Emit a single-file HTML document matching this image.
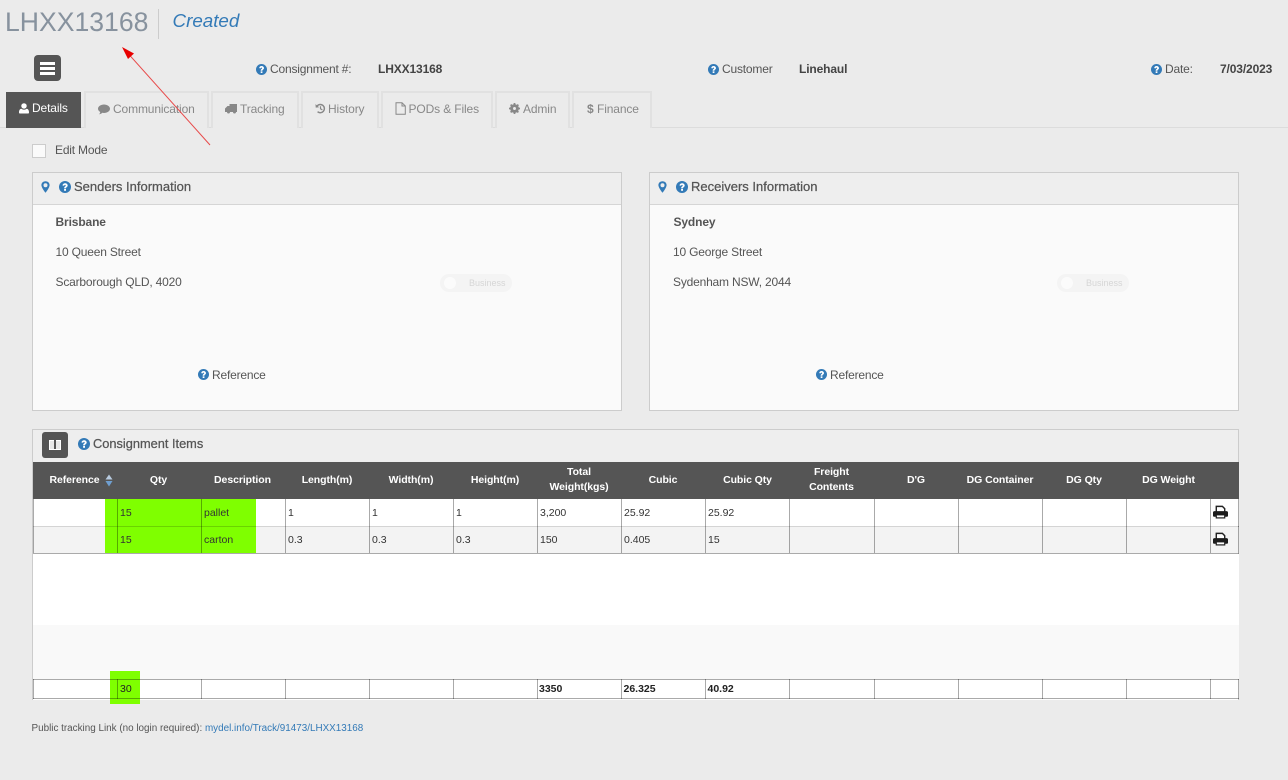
<!DOCTYPE html>
<html><head><meta charset="utf-8"><title>LHXX13168</title>
<style>
html,body{margin:0;padding:0;width:1288px;height:780px;overflow:hidden;background:#ebebeb;font-family:"Liberation Sans",sans-serif;color:#444}
.a{position:absolute;box-sizing:border-box}
.t{position:absolute;white-space:nowrap;font-size:12px;line-height:14px;color:#555;letter-spacing:-.19px}
.b{font-weight:bold;color:#444;letter-spacing:-.13px}
.tab{position:absolute;box-sizing:border-box;top:91px;height:37px;border:2px solid #e1e1e1;border-bottom:0;background:#ebebeb;color:#888;font-size:12px;line-height:32px;white-space:nowrap;letter-spacing:-.13px}
.tab svg{position:absolute}
.tab span{position:absolute;top:0}
.h{position:absolute;font-size:10.5px;font-weight:bold;color:#fff;text-align:center;line-height:15px;white-space:nowrap;transform:translateX(-50%);letter-spacing:-.08px}
.c{position:absolute;font-size:10.5px;line-height:12px;color:#333;white-space:nowrap}
.v{position:absolute;width:1px;background:#aaa;mix-blend-mode:multiply}
.l{position:absolute;height:1px;background:#aaa;mix-blend-mode:multiply}
.ph{position:absolute;font-size:13px;line-height:16px;color:#555;white-space:nowrap;-webkit-text-stroke:.25px #555}
</style></head><body>
<svg width="0" height="0" style="position:absolute"><defs>
<symbol id="q" viewBox="0 0 12 12"><circle cx="6" cy="6" r="6" fill="#337ab7"/><path d="M3.500 4.500C3.600 3 4.800 2.200 6.100 2.200 7.500 2.200 8.700 3.100 8.700 4.500 8.700 6 7 6.100 7 7.400H5.100C5.100 5.500 6.700 5.300 6.700 4.600 6.700 4.200 6.400 3.900 6 3.900 5.500 3.900 5.200 4.300 5.200 4.800Z" fill="#fff"/><rect x="5.100" y="8" width="1.900" height="1.800" fill="#fff"/></symbol>
<symbol id="pin" viewBox="0 0 9 12"><path fill-rule="evenodd" d="M4.500.2C2 .2.400 2 .4 4.100.4 6.200 3 9.800 4.500 11.800 6 9.800 8.600 6.200 8.600 4.100 8.600 2 7 .2 4.500.2ZM4.500 2.200A2 2 0 1 1 4.500 6.200 2 2 0 0 1 4.500 2.200Z" fill="#337ab7"/></symbol>
<symbol id="pr" viewBox="0 0 16 14"><path d="M3.500 6.500V1h6.500l2.500 2.500V6.500" fill="#fff" stroke="#222" stroke-width="1.500"/><path d="M1.500 6h13c.7 0 1.500.6 1.500 1.300V11c0 .6-.4 1-1 1H1c-.6 0-1-.4-1-1V7.300C0 6.600.8 6 1.500 6Z" fill="#1c1c1c"/><rect x="3.500" y="10" width="9" height="3.300" fill="#fff" stroke="#222" stroke-width="1.300"/><rect x="3" y="8.700" width="10" height="1.500" fill="#1c1c1c"/></symbol>
</defs></svg>

<!-- title -->
<div class="t" style="left:5px;top:7px;font-size:26.6px;line-height:31px;color:#87929e;letter-spacing:0">LHXX13168</div>
<div class="a" style="left:158px;top:9px;width:1px;height:30px;background:#ccc"></div>
<div class="t" style="left:172.500px;top:10px;font-size:18.800px;line-height:21px;font-style:italic;color:#337ab7;letter-spacing:0">Created</div>

<!-- menu -->
<div class="a" style="left:34px;top:55px;width:27px;height:26px;background:#555;border-radius:4px"></div>
<div class="a" style="left:40px;top:62px;width:15px;height:2.500px;background:#fff"></div>
<div class="a" style="left:40px;top:67px;width:15px;height:2.500px;background:#fff"></div>
<div class="a" style="left:40px;top:72px;width:15px;height:2.500px;background:#fff"></div>

<svg class="a" style="left:255.500px;top:63.500px" width="11" height="11"><use href="#q"/></svg>
<div class="t" style="left:270px;top:62px">Consignment #:</div>
<div class="t b" style="left:378px;top:62px">LHXX13168</div>
<svg class="a" style="left:707.500px;top:63.500px" width="11" height="11"><use href="#q"/></svg>
<div class="t" style="left:722px;top:62px">Customer</div>
<div class="t b" style="left:799px;top:62px">Linehaul</div>
<svg class="a" style="left:1150.500px;top:63.500px" width="11" height="11"><use href="#q"/></svg>
<div class="t" style="left:1165px;top:62px">Date:</div>
<div class="t b" style="left:1220px;top:62px">7/03/2023</div>

<!-- tabs -->
<div class="a" style="left:0;top:127px;width:1288px;height:1px;background:#dcdcdc"></div>
<div class="tab" style="left:6px;top:92px;width:75px;height:36px;background:#555;border:0;color:#fff;line-height:33px">
<svg style="left:13px;top:11px" width="10" height="11" viewBox="0 0 11 12"><circle cx="5.500" cy="3.200" r="3" fill="#fff"/><path d="M.8 11.500C.2 11.500 0 11 0 10.300 0 8 1 6.300 2.800 6.300 3.500 7 4.400 7.300 5.500 7.300S7.500 7 8.200 6.300C10 6.300 11 8 11 10.300 11 11 10.800 11.500 10.200 11.500Z" fill="#fff"/></svg><span style="left:26px">Details</span></div>
<div class="tab" style="left:84px;width:125px">
<svg style="left:12px;top:11px" width="12" height="11" viewBox="0 0 12 11"><path d="M6 .5C9.200.5 12 2.300 12 4.800S9.200 9 6 9C5.300 9 4.800 9 4.300 8.800 3.500 9.600 2.300 10.300 1 10.300 1.800 9.500 2.200 8.700 2.200 8 .8 7.200 0 6.100 0 4.800 0 2.300 2.800.5 6 .5Z" fill="#888"/></svg><span style="left:27px">Communication</span></div>
<div class="tab" style="left:211px;width:88px">
<svg style="left:12px;top:11px" width="12" height="10" viewBox="0 0 12 10"><path d="M4.500 0H12V8H11A1.500 1.500 0 0 1 8 8H5A1.500 1.500 0 0 1 2 8H0V4.500L2.500 2H4.500Z" fill="#888"/></svg><span style="left:27px">Tracking</span></div>
<div class="tab" style="left:301px;width:78px">
<svg style="left:12px;top:10px" width="11" height="11" viewBox="0 0 12 12"><path d="M2.300 3.200A4.500 4.500 0 1 1 2.800 9.500" fill="none" stroke="#888" stroke-width="1.600"/><path d="M0.500 1.200L0.800 5 4.500 4.700Z" fill="#888"/><path d="M6 3.500V6.300L8 7.500" fill="none" stroke="#888" stroke-width="1.300"/></svg><span style="left:25px">History</span></div>
<div class="tab" style="left:381px;width:112px">
<svg style="left:12px;top:9px" width="11" height="13" viewBox="0 0 11 13"><path d="M1 .7H7L10.300 4V12.300H1Z M7 .7V4H10.300" fill="#ebebeb" stroke="#888" stroke-width="1"/></svg><span style="left:25.500px">PODs &amp; Files</span></div>
<div class="tab" style="left:495px;width:75px">
<svg style="left:12px;top:10px" width="11" height="11" viewBox="0 0 12 12"><circle cx="6" cy="6" r="3.500" fill="none" stroke="#888" stroke-width="2.600"/><path d="M6 0V12M0 6H12M1.800 1.800L10.200 10.200M10.200 1.800L1.800 10.200" stroke="#888" stroke-width="1.900"/><circle cx="6" cy="6" r="1.600" fill="#ebebeb"/></svg><span style="left:26px">Admin</span></div>
<div class="tab" style="left:572px;width:80px"><span style="left:13px;font-weight:bold">$</span><span style="left:23px">Finance</span></div>

<!-- edit mode -->
<div class="a" style="left:32px;top:144px;width:14px;height:14px;background:#fafafa;border:1px solid #ccc"></div>
<div class="t" style="left:55px;top:143px">Edit Mode</div>

<!-- senders panel -->
<div class="a" style="left:32px;top:172px;width:590px;height:239px;background:#fafafa;border:1px solid #ccc"></div>
<div class="a" style="left:33px;top:173px;width:588px;height:32px;background:#eee;border-bottom:1px solid #d5d5d5"></div>
<svg class="a" style="left:41px;top:181px" width="9" height="12"><use href="#pin"/></svg>
<svg class="a" style="left:58.500px;top:181px" width="12" height="12"><use href="#q"/></svg>
<div class="ph" style="left:74px;top:179px">Senders Information</div>
<div class="t b" style="left:55.500px;top:215px;color:#555">Brisbane</div>
<div class="t" style="left:55.500px;top:245px">10 Queen Street</div>
<div class="t" style="left:55.500px;top:275px">Scarborough QLD, 4020</div>
<div class="a" style="left:440px;top:274px;width:72px;height:18px;border-radius:9px;background:#f4f4f4"></div>
<div class="a" style="left:444px;top:277px;width:12px;height:12px;border-radius:6px;background:#fbfbfb"></div>
<div class="t" style="left:469px;top:277px;font-size:9px;line-height:12px;color:#d6d6d6;letter-spacing:0">Business</div>
<svg class="a" style="left:198px;top:369px" width="11" height="11"><use href="#q"/></svg>
<div class="t" style="left:212px;top:368px">Reference</div>

<!-- receivers panel -->
<div class="a" style="left:649px;top:172px;width:590px;height:239px;background:#fafafa;border:1px solid #ccc"></div>
<div class="a" style="left:650px;top:173px;width:588px;height:32px;background:#eee;border-bottom:1px solid #d5d5d5"></div>
<svg class="a" style="left:658px;top:181px" width="9" height="12"><use href="#pin"/></svg>
<svg class="a" style="left:675.500px;top:181px" width="12" height="12"><use href="#q"/></svg>
<div class="ph" style="left:691px;top:179px">Receivers Information</div>
<div class="t b" style="left:673.500px;top:215px;color:#555">Sydney</div>
<div class="t" style="left:673px;top:245px">10 George Street</div>
<div class="t" style="left:673px;top:275px">Sydenham NSW, 2044</div>
<div class="a" style="left:1057px;top:274px;width:72px;height:18px;border-radius:9px;background:#f4f4f4"></div>
<div class="a" style="left:1061px;top:277px;width:12px;height:12px;border-radius:6px;background:#fbfbfb"></div>
<div class="t" style="left:1086px;top:277px;font-size:9px;line-height:12px;color:#d6d6d6;letter-spacing:0">Business</div>
<svg class="a" style="left:816px;top:369px" width="11" height="11"><use href="#q"/></svg>
<div class="t" style="left:830px;top:368px">Reference</div>

<!-- items panel -->
<div class="a" style="left:32px;top:429px;width:1207px;height:271px;background:#fff;border:1px solid #ccc;border-bottom:0"></div>
<div class="a" style="left:33px;top:430px;width:1205px;height:32px;background:#eee"></div>
<div class="a" style="left:42px;top:432px;width:26px;height:26px;background:#555;border-radius:3px"></div>
<div class="a" style="left:48.500px;top:439.500px;width:12.500px;height:10px;border:1.500px solid #fff;background:#e8e8e8"></div>
<div class="a" style="left:54px;top:440px;width:1.500px;height:9px;background:#555"></div>
<svg class="a" style="left:77.500px;top:437.500px" width="12" height="12"><use href="#q"/></svg>
<div class="ph" style="left:93px;top:436px;font-size:12.800px">Consignment Items</div>

<!-- header -->
<div class="a" style="left:33px;top:462px;width:1206px;height:37px;background:#555"></div>
<div class="h" style="left:74.500px;top:473px">Reference</div>
<svg class="a" style="left:105px;top:474px" width="8" height="13" viewBox="0 0 8 13"><path d="M4 .5L7.500 5.500H.5Z" fill="#b8cbe0"/><path d="M4 12.500L7.500 7H.5Z" fill="#6f9fd0"/></svg>
<div class="h" style="left:158.500px;top:473px">Qty</div>
<div class="h" style="left:242.500px;top:473px">Description</div>
<div class="h" style="left:327px;top:473px">Length(m)</div>
<div class="h" style="left:411px;top:473px">Width(m)</div>
<div class="h" style="left:495px;top:473px">Height(m)</div>
<div class="h" style="left:579px;top:465px">Total<br>Weight(kgs)</div>
<div class="h" style="left:663px;top:473px">Cubic</div>
<div class="h" style="left:747.500px;top:473px">Cubic Qty</div>
<div class="h" style="left:831.500px;top:465px">Freight<br>Contents</div>
<div class="h" style="left:916px;top:473px">D'G</div>
<div class="h" style="left:1000px;top:473px">DG Container</div>
<div class="h" style="left:1084px;top:473px">DG Qty</div>
<div class="h" style="left:1168.500px;top:473px">DG Weight</div>

<!-- rows -->
<div class="a" style="left:33px;top:499px;width:1206px;height:27px;background:#fff"></div>
<div class="a" style="left:33px;top:527px;width:1206px;height:26px;background:#f3f3f3"></div>
<div class="a" style="left:33px;top:554px;width:1206px;height:71px;background:#fff"></div>
<div class="a" style="left:33px;top:625px;width:1206px;height:54px;background:#f9f9f9"></div>
<div class="a" style="left:33px;top:679px;width:1206px;height:20px;background:#fff"></div>
<div class="a" style="left:105px;top:499px;width:151px;height:54px;background:#7fff00"></div>
<div class="a" style="left:110px;top:671px;width:30px;height:33px;background:#7fff00"></div>

<div class="l" style="left:33px;top:526px;width:1206px;background:#d4d4d4"></div>
<div class="l" style="left:33px;top:553px;width:1206px"></div>
<div class="l" style="left:33px;top:679px;width:1206px"></div>
<div class="l" style="left:33px;top:698px;width:1206px"></div>

<div class="v" style="left:33px;top:499px;height:54px"></div><div class="v" style="left:117px;top:499px;height:54px"></div><div class="v" style="left:201px;top:499px;height:54px"></div><div class="v" style="left:285px;top:499px;height:54px"></div><div class="v" style="left:369px;top:499px;height:54px"></div><div class="v" style="left:453px;top:499px;height:54px"></div><div class="v" style="left:537px;top:499px;height:54px"></div><div class="v" style="left:621px;top:499px;height:54px"></div><div class="v" style="left:705px;top:499px;height:54px"></div><div class="v" style="left:789px;top:499px;height:54px"></div><div class="v" style="left:874px;top:499px;height:54px"></div><div class="v" style="left:958px;top:499px;height:54px"></div><div class="v" style="left:1042px;top:499px;height:54px"></div><div class="v" style="left:1126px;top:499px;height:54px"></div><div class="v" style="left:1210px;top:499px;height:54px"></div><div class="v" style="left:1238px;top:499px;height:54px"></div>
<div class="v" style="left:33px;top:679px;height:20px"></div><div class="v" style="left:117px;top:679px;height:20px"></div><div class="v" style="left:201px;top:679px;height:20px"></div><div class="v" style="left:285px;top:679px;height:20px"></div><div class="v" style="left:369px;top:679px;height:20px"></div><div class="v" style="left:453px;top:679px;height:20px"></div><div class="v" style="left:537px;top:679px;height:20px"></div><div class="v" style="left:621px;top:679px;height:20px"></div><div class="v" style="left:705px;top:679px;height:20px"></div><div class="v" style="left:789px;top:679px;height:20px"></div><div class="v" style="left:874px;top:679px;height:20px"></div><div class="v" style="left:958px;top:679px;height:20px"></div><div class="v" style="left:1042px;top:679px;height:20px"></div><div class="v" style="left:1126px;top:679px;height:20px"></div><div class="v" style="left:1210px;top:679px;height:20px"></div><div class="v" style="left:1238px;top:679px;height:20px"></div>

<div class="c" style="left:120px;top:507px">15</div><div class="c" style="left:204px;top:507px">pallet</div><div class="c" style="left:288px;top:507px">1</div><div class="c" style="left:372px;top:507px">1</div><div class="c" style="left:456px;top:507px">1</div><div class="c" style="left:540px;top:507px">3,200</div><div class="c" style="left:624px;top:507px">25.92</div><div class="c" style="left:708px;top:507px">25.92</div>
<div class="c" style="left:120px;top:534px">15</div><div class="c" style="left:204px;top:534px">carton</div><div class="c" style="left:288px;top:534px">0.3</div><div class="c" style="left:372px;top:534px">0.3</div><div class="c" style="left:456px;top:534px">0.3</div><div class="c" style="left:540px;top:534px">150</div><div class="c" style="left:624px;top:534px">0.405</div><div class="c" style="left:708px;top:534px">15</div>
<svg class="a" style="left:1213px;top:505px" width="15" height="14"><use href="#pr"/></svg>
<svg class="a" style="left:1213px;top:532px" width="15" height="14"><use href="#pr"/></svg>

<div class="c" style="left:120px;top:683px;font-weight:normal;color:#222">30</div>
<div class="c" style="left:539px;top:683px;font-weight:bold;color:#222">3350</div>
<div class="c" style="left:623.500px;top:683px;font-weight:bold;color:#222">26.325</div>
<div class="c" style="left:707.500px;top:683px;font-weight:bold;color:#222">40.92</div>

<!-- link -->
<div class="t" style="left:31.500px;top:722px;font-size:9.900px;color:#555;letter-spacing:0">Public tracking Link (no login required): <span style="color:#337ab7">mydel.info/Track/91473/LHXX13168</span></div>

<!-- arrow -->
<svg class="a" style="left:115px;top:40px" width="100" height="110" viewBox="0 0 100 110"><line x1="95" y1="105" x2="10" y2="10" stroke="#e84a4a" stroke-width="1"/><path d="M7 7L19 13.500 13 19Z" fill="#e80000"/></svg>
</body></html>
